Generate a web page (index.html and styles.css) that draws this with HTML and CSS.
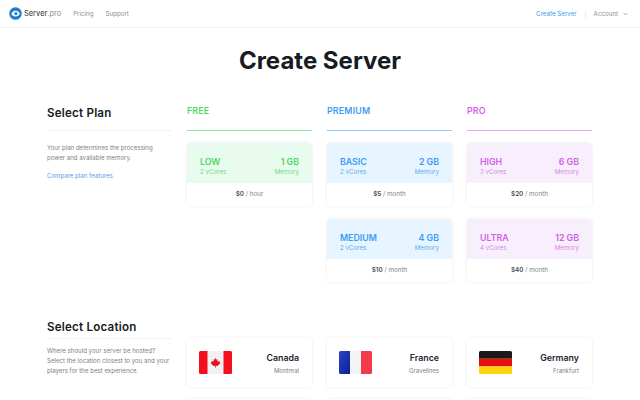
FILE: index.html
```html
<!DOCTYPE html>
<html lang="en">
<head>
    <meta charset="UTF-8">
    <title>Create Server</title>
    <link rel="stylesheet" href="styles.css">
</head>
<body>
    <nav class="navbar">
        <a class="brand">
            <svg class="brand-icon" width="13" height="13" viewBox="0 0 14 14">
                <circle cx="7" cy="7" r="6.8" fill="#1f7fd0"/>
                <path d="M2.4 7.6C3.6 5.2 5.3 4 7.2 4c1.9 0 3.4 1.2 4.6 3.2-1.2 1.9-2.8 3-4.7 3-1.9 0-3.5-.9-4.7-2.6z" fill="#fff"/>
                <circle cx="7.4" cy="7.1" r="1.7" fill="#1f7fd0"/>
            </svg>
            <span class="brand-name">Server<span class="brand-tld">.pro</span></span>
        </a>
        <a class="nav-link">Pricing</a>
        <a class="nav-link">Support</a>
        <div class="nav-right">
            <a class="nav-link nav-create">Create Server</a>
            <span class="nav-divider"></span>
            <a class="nav-link nav-account">Account</a>
            <svg class="chevron" width="5" height="4" viewBox="0 0 5 4"><path d="M.5 1l2 2 2-2" fill="none" stroke="#888" stroke-width=".7"/></svg>
        </div>
    </nav>

    <h1 class="page-title">Create Server</h1>

    <section class="section plan-section">
        <div class="intro">
            <h2>Select Plan</h2>
            <p>Your plan determines the processing power and available memory.</p>
            <p class="intro-link"><a>Compare plan features.</a></p>
        </div>
        <div class="tier tier-free">
            <h3 class="tier-name">FREE</h3>
            <div class="plan-card">
                <div class="plan-head">
                    <div class="plan-row"><strong>LOW</strong><strong>1 GB</strong></div>
                    <div class="plan-row plan-sub"><span>2 vCores</span><span>Memory</span></div>
                </div>
                <div class="plan-price"><b>$0</b> / hour</div>
            </div>
        </div>
        <div class="tier tier-premium">
            <h3 class="tier-name">PREMIUM</h3>
            <div class="plan-card">
                <div class="plan-head">
                    <div class="plan-row"><strong>BASIC</strong><strong>2 GB</strong></div>
                    <div class="plan-row plan-sub"><span>2 vCores</span><span>Memory</span></div>
                </div>
                <div class="plan-price"><b>$5</b> / month</div>
            </div>
            <div class="plan-card">
                <div class="plan-head">
                    <div class="plan-row"><strong>MEDIUM</strong><strong>4 GB</strong></div>
                    <div class="plan-row plan-sub"><span>2 vCores</span><span>Memory</span></div>
                </div>
                <div class="plan-price"><b>$10</b> / month</div>
            </div>
        </div>
        <div class="tier tier-pro">
            <h3 class="tier-name">PRO</h3>
            <div class="plan-card">
                <div class="plan-head">
                    <div class="plan-row"><strong>HIGH</strong><strong>6 GB</strong></div>
                    <div class="plan-row plan-sub"><span>3 vCores</span><span>Memory</span></div>
                </div>
                <div class="plan-price"><b>$20</b> / month</div>
            </div>
            <div class="plan-card">
                <div class="plan-head">
                    <div class="plan-row"><strong>ULTRA</strong><strong>12 GB</strong></div>
                    <div class="plan-row plan-sub"><span>4 vCores</span><span>Memory</span></div>
                </div>
                <div class="plan-price"><b>$40</b> / month</div>
            </div>
        </div>
    </section>

    <section class="section location-section">
        <div class="intro">
            <h2>Select Location</h2>
            <p>Where should your server be hosted? Select the location closest to you and your players for the best experience.</p>
        </div>
        <div class="location-card">
            <svg class="flag" width="33" height="23" viewBox="0 0 33 23">
                <rect width="33" height="23" rx="1.5" fill="#f1f1f1"/>
                <path d="M1.5 0H8.5V23H1.5A1.5 1.5 0 0 1 0 21.5V1.5A1.5 1.5 0 0 1 1.5 0z" fill="#f5101c"/>
                <path d="M24.5 0H31.5A1.5 1.5 0 0 1 33 1.5V21.5A1.5 1.5 0 0 1 31.5 23H24.5z" fill="#f5101c"/>
                <path d="M16.5 7l1 1.8 1-.5-.3 2.4 1.2-.9.4 1 1.3-.3-.4 1.5.6.3-2.3 1.9.3.8-2.4-.3v1.8h-.8v-1.8l-2.4.3.3-.8-2.3-1.9.6-.3-.4-1.5 1.3.3.4-1 1.2.9-.3-2.4 1 .5z" fill="#e8101c"/>
            </svg>
            <div class="location-text"><strong>Canada</strong><span>Montreal</span></div>
        </div>
        <div class="location-card">
            <svg class="flag" width="33" height="23" viewBox="0 0 33 23">
                <defs>
                    <linearGradient id="fr-blue" x1="0" y1="0" x2="1" y2="1"><stop offset="0" stop-color="#2a45c8"/><stop offset="1" stop-color="#0d1f94"/></linearGradient>
                </defs>
                <rect width="33" height="23" rx="1.5" fill="#f3f3f5"/>
                <path d="M1.5 0H11V23H1.5A1.5 1.5 0 0 1 0 21.5V1.5A1.5 1.5 0 0 1 1.5 0z" fill="url(#fr-blue)"/>
                <path d="M22 0H31.5A1.5 1.5 0 0 1 33 1.5V21.5A1.5 1.5 0 0 1 31.5 23H22z" fill="#f43a4c"/>
            </svg>
            <div class="location-text"><strong>France</strong><span>Gravelines</span></div>
        </div>
        <div class="location-card">
            <svg class="flag" width="33" height="23" viewBox="0 0 33 23">
                <path d="M1.5 0H31.5A1.5 1.5 0 0 1 33 1.5V7.7H0V1.5A1.5 1.5 0 0 1 1.5 0z" fill="#1a1a1a"/>
                <rect y="7.7" width="33" height="7.7" fill="#e8100f"/>
                <path d="M0 15.4H33V21.5A1.5 1.5 0 0 1 31.5 23H1.5A1.5 1.5 0 0 1 0 21.5z" fill="#ffd20a"/>
            </svg>
            <div class="location-text"><strong>Germany</strong><span>Frankfurt</span></div>
        </div>
        <div class="location-card"></div>
        <div class="location-card"></div>
        <div class="location-card"></div>
    </section>
</body>
</html>
```

FILE: styles.css
```css
html, body {
    height: 100%;
    overflow: hidden;
}
body {
    margin: 0;
    background: #fff;
    font-family: "Inter", "Liberation Sans", sans-serif;
    color: #1a202c;
}
.navbar {
    display: flex;
    align-items: center;
    height: 27px;
    padding: 0 12px 0 9px;
    border-bottom: 1px solid #f4f5f6;
}
.brand {
    display: flex;
    align-items: center;
    margin-right: 12px;
}
.brand-icon {
    margin-right: 2px;
}
.brand-name {
    font-size: 7.4px;
    font-weight: 500;
    color: #4a4e54;
}
.brand-tld {
    font-weight: 400;
    color: #8b8e93;
}
.nav-link {
    font-size: 6.2px;
    color: #8b8e93;
    margin-right: 12px;
}
.nav-right {
    display: flex;
    align-items: center;
    margin-left: auto;
}
.nav-create {
    color: #3b9bea;
    margin-right: 8px;
}
.nav-divider {
    width: 1px;
    height: 8px;
    background: #eceef0;
    margin-right: 8px;
}
.nav-account {
    margin-right: 5px;
}
.page-title {
    margin: 17px 0 0;
    height: 32px;
    line-height: 32px;
    text-align: center;
    font-size: 24px;
    font-weight: 700;
    color: #171b22;
}
.section {
    display: grid;
    grid-template-columns: repeat(4, 125px);
    column-gap: 15px;
    padding: 0 47px;
}
.plan-section {
    margin-top: 13px;
    align-items: start;
}
.location-section {
    margin-top: 43px;
    row-gap: 12px;
    grid-template-rows: 49px 49px;
}
.intro h2 {
    margin: 0;
    font-size: 11.6px;
    font-weight: 600;
    letter-spacing: 0.2px;
    color: #171b22;
    border-bottom: 1px solid #f1f2f4;
}
.plan-section .intro {
    padding-top: 12px;
}
.plan-section .intro h2 {
    height: 28px;
    line-height: 22px;
}
.location-section .intro {
    grid-row: span 2;
    margin-top: -20px;
}
.location-section .intro h2 {
    height: 20px;
    line-height: 18px;
}
.intro p {
    margin: 12px 0 0;
    font-size: 6.1px;
    line-height: 10px;
    color: #7c7f85;
}
.intro .intro-link {
    margin-top: 8px;
}
.location-section .intro p {
    margin-top: 7px;
}
.intro a {
    color: #5a9be8;
}
.tier {
    --accent: #3b9bf5;
    --line: #8ccbff;
    --wash: #e6f5ff;
    --soft: #5eaaf0;
}
.tier-free {
    --accent: #4cd964;
    --line: #8be8a0;
    --wash: #e9faee;
    --soft: #6ddb85;
}
.tier-pro {
    --accent: #d25fe8;
    --line: #eca4f8;
    --wash: #f8effc;
    --soft: #d884ea;
}
.tier-name {
    margin: 0 0 12px;
    height: 26px;
    padding-top: 14px;
    line-height: 14px;
    font-size: 8.8px;
    font-weight: 600;
    letter-spacing: 0.2px;
    color: var(--accent);
    border-bottom: 1px solid var(--line);
}
.plan-card {
    height: 63px;
    margin-bottom: 13px;
    border-radius: 4px;
    overflow: hidden;
    background: #fff;
    box-shadow: 0 0 3px rgba(0, 0, 0, 0.1);
}
.plan-head {
    height: 40px;
    padding: 14px 13px 0;
    box-sizing: border-box;
    background: var(--wash);
}
.plan-row {
    display: flex;
    justify-content: space-between;
    font-size: 8.8px;
    line-height: 10px;
    font-weight: 600;
    color: var(--accent);
}
.plan-row strong {
    font-weight: 600;
}
.plan-sub {
    font-size: 6.2px;
    line-height: 9px;
    font-weight: 400;
    color: var(--soft);
}
.plan-price {
    height: 23px;
    line-height: 23px;
    text-align: center;
    font-size: 6.3px;
    color: #7c7f85;
}
.plan-price b {
    font-weight: 600;
    color: #4a4e54;
}
.location-card {
    display: flex;
    align-items: center;
    justify-content: space-between;
    height: 49px;
    padding: 0 13px 0 12px;
    box-sizing: border-box;
    border-radius: 4px;
    background: #fff;
    box-shadow: 0 0 3px rgba(0, 0, 0, 0.1);
}
.flag {
    flex: none;
}
.location-text {
    display: flex;
    flex-direction: column;
    align-items: flex-end;
}
.location-text strong {
    font-size: 8.8px;
    line-height: 13px;
    font-weight: 600;
    color: #1f2630;
}
.location-text span {
    margin-top: 2px;
    font-size: 6px;
    line-height: 9px;
    color: #7c7f85;
}
```
